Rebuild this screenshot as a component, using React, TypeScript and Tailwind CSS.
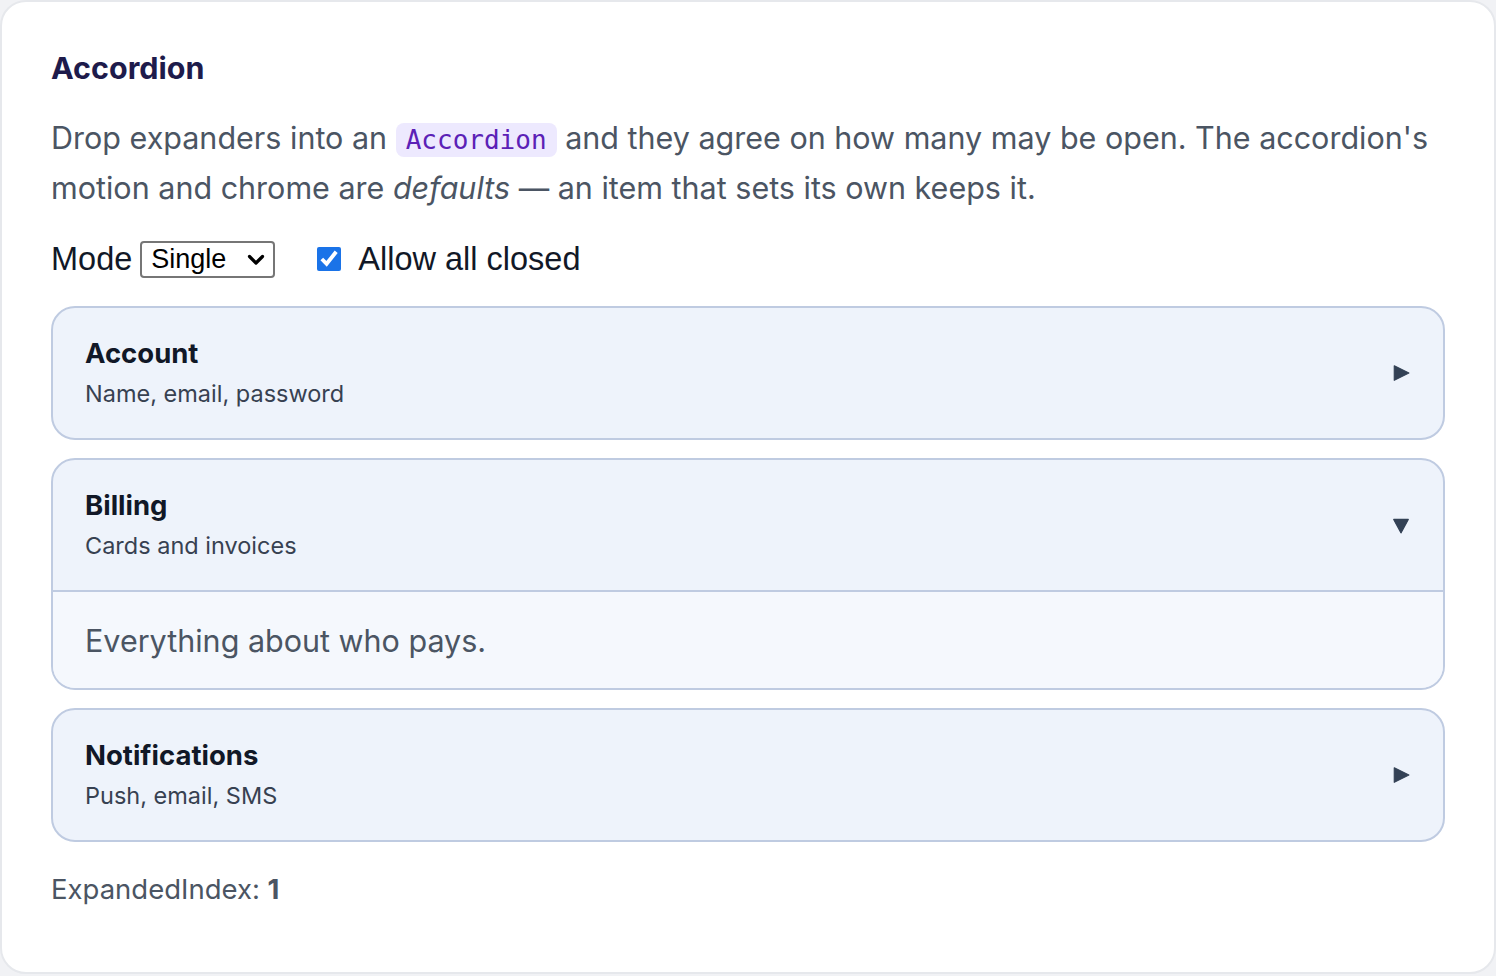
import { useState } from "react";

type Item = { title: string; subtitle: string; body: string };

const items: Item[] = [
    { title: "Account", subtitle: "Name, email, password", body: "Everything about your account." },
    { title: "Billing", subtitle: "Cards and invoices", body: "Everything about who pays." },
    { title: "Notifications", subtitle: "Push, email, SMS", body: "Everything about alerts." },
];

function Arrow({ open }: { open: boolean }) {
    return (
        <svg width="18" height="18" viewBox="0 0 16 16" className="text-[#334155]">
            {open
                ? <path d="M1.5 3 L14.5 3 L8 15 Z" fill="currentColor" strokeLinejoin="round" stroke="currentColor" strokeWidth="1" />
                : <path d="M2 1.5 L15 8 L2 14.5 Z" fill="currentColor" strokeLinejoin="round" stroke="currentColor" strokeWidth="1" />}
        </svg>
    );
}

export default function App() {
    const [expanded, setExpanded] = useState<number | null>(1);
    const [allowClosed, setAllowClosed] = useState(true);

    return (
        <div className="min-h-screen bg-[#f1f2f5] font-['Inter',sans-serif]">
            <div className="h-[974px] rounded-[26px] border-2 border-[#e6e8ec] bg-white px-[49px] pt-[44px]">
                <h2 className="text-[30.5px] font-bold leading-[44px] text-[#1e1b4b]">Accordion</h2>
                <p className="mt-[24px] text-[30.5px] leading-[48px] text-[#4b5563]">
                    Drop expanders into an{" "}
                    <code className="rounded-[8px] bg-[#ede9fe] px-[10px] py-[2px] font-['DejaVu_Sans_Mono',monospace] text-[26px] text-[#5b21b6]">Accordion</code>{" "}
                    and they agree on how many may be open. The accordion's motion and chrome are <em>defaults</em> — an item that sets its own keeps it.
                </p>
                <div className="mt-[23px] flex items-center font-['Liberation_Sans',sans-serif] text-[32.5px] text-[#111827]">
                    <label className="flex items-center gap-[8px]">
                        Mode
                        <span className="relative flex">
                            <select className="h-[37px] w-[135px] appearance-none rounded-[4px] border-2 border-[#767676] bg-white pl-[9px] text-[27px] leading-[33px] text-black">
                                <option>Single</option>
                                <option>Multiple</option>
                            </select>
                            <svg width="18" height="12" viewBox="0 0 18 12" className="pointer-events-none absolute right-[10px] top-[13px]">
                                <path d="M2.5 2.5 L9 9 L15.5 2.5" fill="none" stroke="black" strokeWidth="3.2" strokeLinecap="round" strokeLinejoin="round" />
                            </svg>
                        </span>
                    </label>
                    <label className="ml-[42px] flex items-center gap-[17px]">
                        <input
                            type="checkbox"
                            checked={allowClosed}
                            onChange={(e) => setAllowClosed(e.target.checked)}
                            className="h-[24px] w-[24px] accent-[#1a73e8]"
                        />
                        Allow all closed
                    </label>
                </div>

                <div className="mt-[22px] flex flex-col gap-[18px]">
                    {items.map((item, i) => {
                        const open = expanded === i;
                        return (
                            <div key={item.title} className="overflow-hidden rounded-[24px] border-2 border-[#bfcbe1] bg-[#eef3fb]">
                                <button
                                    className="flex h-[130px] w-full items-center justify-between pl-[32px] pr-[33px] text-left"
                                    onClick={() => setExpanded(open && allowClosed ? null : i)}
                                >
                                    <div className="flex flex-col">
                                        <span className="text-[27.5px] font-bold leading-[34px] text-[#111827]">{item.title}</span>
                                        <span className="mt-[9px] text-[23.5px] leading-[30px] text-[#374151]">{item.subtitle}</span>
                                    </div>
                                    <Arrow open={open} />
                                </button>
                                {open && (
                                    <div className="border-t-2 border-[#bfcbe1] bg-[#f5f8fd] pl-[32px] pt-[29px] pb-[27px] text-[30.5px] leading-[40px] text-[#4b5563]">
                                        {item.body}
                                    </div>
                                )}
                            </div>
                        );
                    })}
                </div>

                <p className="mt-[30px] text-[27.5px] leading-[34px] text-[#4b5563]">
                    ExpandedIndex: <b>{expanded ?? "none"}</b>
                </p>
            </div>
        </div>
    );
}
